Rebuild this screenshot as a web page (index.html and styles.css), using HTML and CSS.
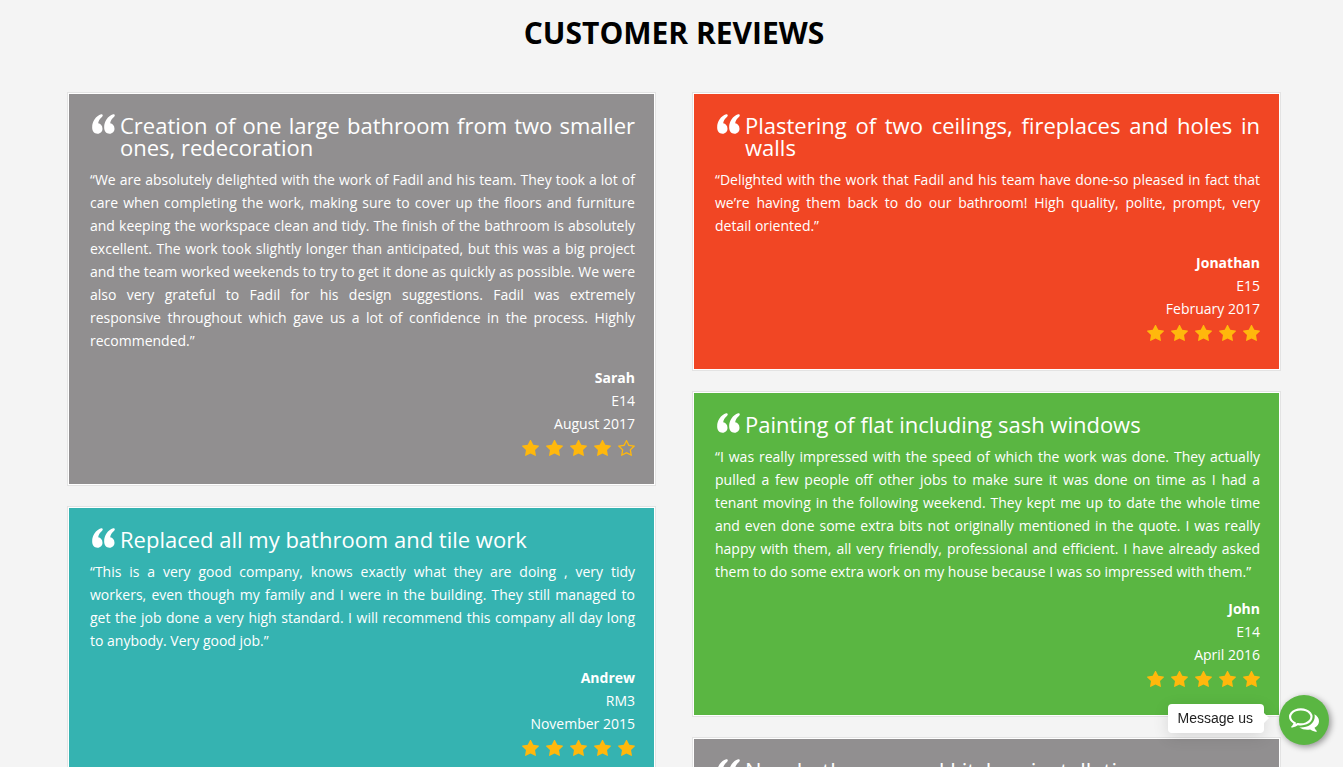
FILE: index.html
```html
<!DOCTYPE html>
<html lang="en">
<head>
  <meta charset="UTF-8">
  <meta name="viewport" content="width=device-width, initial-scale=1">
  <title>Customer Reviews</title>
  <link rel="stylesheet" href="styles.css">
</head>
<body>
  <!-- shared icons -->
  <svg class="icon-defs" aria-hidden="true">
    <symbol id="quote" viewBox="0 0 68 60">
      <path d="M27 1C11 6 0 22 0 40c0 12 6 19 16 19 9 0 15-7 15-15 0-9-6-15-13-16 1-8 5-14 12-20 4-4 1-8-3-7z"/>
      <path d="M63 1C47 6 36 22 36 40c0 12 6 19 16 19 9 0 15-7 15-15 0-9-6-15-13-16 1-8 5-14 12-20 4-4 1-8-3-7z"/>
    </symbol>
    <symbol id="star" viewBox="64 60 1664 1664">
      <path d="M1728 647q0 22-26 48l-363 354 86 500q1 7 1 20 0 21-10.5 35.5t-30.5 14.5q-19 0-40-12l-449-236-449 236q-22 12-40 12-21 0-31.5-14.5t-10.5-35.5q0-6 2-20l86-500-364-354q-25-27-25-48 0-37 56-46l502-73 225-455q19-41 49-41t49 41l225 455 502 73q56 9 56 46z"/>
    </symbol>
    <symbol id="star-o" viewBox="64 60 1664 1664">
      <path d="M1201 1004l306-297-422-62-189-382-189 382-422 62 306 297-73 421 378-199 377 199zm527-357q0 22-26 48l-363 354 86 500q1 7 1 20 0 50-41 50-19 0-40-12l-449-236-449 236q-22 12-40 12-21 0-31.5-14.5t-10.5-35.5q0-6 2-20l86-500-364-354q-25-27-25-48 0-37 56-46l502-73 225-455q19-41 49-41t49 41l225 455 502 73q56 9 56 46z"/>
    </symbol>
  </svg>

  <section class="reviews">
    <h1>Customer Reviews</h1>
    <div class="columns">
      <div class="column">
        <article class="review grey">
          <h2><svg class="quote"><use href="#quote"/></svg>Creation of one large bathroom from two smaller ones, redecoration</h2>
          <p>“We are absolutely delighted with the work of Fadil and his team. They took a lot of care when completing the work, making sure to cover up the floors and furniture and keeping the workspace clean and tidy. The finish of the bathroom is absolutely excellent. The work took slightly longer than anticipated, but this was a big project and the team worked weekends to try to get it done as quickly as possible. We were also very grateful to Fadil for his design suggestions. Fadil was extremely responsive throughout which gave us a lot of confidence in the process. Highly recommended.”</p>
          <div class="author">
            <strong>Sarah</strong>
            <span>E14</span>
            <span>August 2017</span>
            <div class="stars" role="img" aria-label="4 out of 5">
              <svg><use href="#star"/></svg><svg><use href="#star"/></svg><svg><use href="#star"/></svg><svg><use href="#star"/></svg><svg><use href="#star-o"/></svg>
            </div>
          </div>
        </article>
        <article class="review teal">
          <h2><svg class="quote"><use href="#quote"/></svg>Replaced all my bathroom and tile work</h2>
          <p>“This is a very good company, knows exactly what they are doing , very tidy workers, even though my family and I were in the building. They still managed to get the job done a very high standard. I will recommend this company all day long to anybody. Very good job.”</p>
          <div class="author">
            <strong>Andrew</strong>
            <span>RM3</span>
            <span>November 2015</span>
            <div class="stars" role="img" aria-label="5 out of 5">
              <svg><use href="#star"/></svg><svg><use href="#star"/></svg><svg><use href="#star"/></svg><svg><use href="#star"/></svg><svg><use href="#star"/></svg>
            </div>
          </div>
        </article>
      </div>
      <div class="column">
        <article class="review red">
          <h2><svg class="quote"><use href="#quote"/></svg>Plastering of two ceilings, fireplaces and holes in walls</h2>
          <p>“Delighted with the work that Fadil and his team have done-so pleased in fact that we’re having them back to do our bathroom! High quality, polite, prompt, very detail oriented.”</p>
          <div class="author">
            <strong>Jonathan</strong>
            <span>E15</span>
            <span>February 2017</span>
            <div class="stars" role="img" aria-label="5 out of 5">
              <svg><use href="#star"/></svg><svg><use href="#star"/></svg><svg><use href="#star"/></svg><svg><use href="#star"/></svg><svg><use href="#star"/></svg>
            </div>
          </div>
        </article>
        <article class="review green">
          <h2><svg class="quote"><use href="#quote"/></svg>Painting of flat including sash windows</h2>
          <p>“I was really impressed with the speed of which the work was done. They actually pulled a few people off other jobs to make sure it was done on time as I had a tenant moving in the following weekend. They kept me up to date the whole time and even done some extra bits not originally mentioned in the quote. I was really happy with them, all very friendly, professional and efficient. I have already asked them to do some extra work on my house because I was so impressed with them.”</p>
          <div class="author">
            <strong>John</strong>
            <span>E14</span>
            <span>April 2016</span>
            <div class="stars" role="img" aria-label="5 out of 5">
              <svg><use href="#star"/></svg><svg><use href="#star"/></svg><svg><use href="#star"/></svg><svg><use href="#star"/></svg><svg><use href="#star"/></svg>
            </div>
          </div>
        </article>
        <article class="review grey">
          <h2><svg class="quote"><use href="#quote"/></svg>New bathroom and kitchen installation</h2>
        </article>
      </div>
    </div>
  </section>

  <div class="chat">
    <span class="chat-label" id="chat-label">Message us</span>
    <button class="chat-button" type="button" aria-labelledby="chat-label">
      <svg viewBox="0 0 1792 1792"><path d="M704 384q-153 0-286 52t-211.500 141-78.500 191q0 82 53 158t149 132l97 56-35 84q34-20 62-39l44-31 53 10q78 14 153 14 153 0 286-52t211.500-141 78.500-191-78.500-191-211.500-141-286-52zm0-128q191 0 353.500 68.500t256.500 186.500 94 257-94 257-256.500 186.500-353.500 68.500q-86 0-176-16-124 88-278 128-36 9-86 16h-3q-11 0-20.500-8t-11.500-21q-1-3-1-6.500t.5-6.500 2-6l2.500-5 3.500-5.500 4-5 4.500-5 4-4.500q5-6 23-25t26-29.500 22.500-29 25-38.500 20.500-44q-124-72-195-177t-71-224q0-139 94-257t256.500-186.500 353.500-68.500zm822 1169q10 24 20.500 44t25 38.500 22.500 29 26 29.500 23 25q1 1 4 4.500t4.500 5 4 5 3.500 5.500l2.500 5 2 6 .5 6.500-1 6.500q-3 14-13 22t-22 7q-50-7-86-16-154-40-278-128-90 16-176 16-271 0-472-132 58 4 88 4 161 0 309-45t264-129q125-92 192-212t67-254q0-77-23-152 129 71 204 178t75 230q0 120-71 224.500t-195 176.500z"/></svg>
    </button>
  </div>
</body>
</html>
```
FILE: styles.css
```css
* {
  box-sizing: border-box;
}
body {
  margin: 0;
  background: #f4f4f4;
  color: #fff;
  font-family: "Open Sans", sans-serif;
  font-size: 14px;
  line-height: 23px;
}
.icon-defs {
  display: none;
}
.reviews {
  padding: 12px 62px 20px 67px;
}
h1 {
  margin: 0 0 38px;
  color: #000;
  font-size: 30px;
  font-weight: 700;
  line-height: 42px;
  text-align: center;
  text-transform: uppercase;
}
.columns {
  display: grid;
  grid-template-columns: 1fr 1fr;
  gap: 36px;
  align-items: start;
}
.column {
  display: flex;
  flex-direction: column;
  gap: 20px;
}
.review {
  padding: 21px 20px 27px 22px;
  border: 1px solid #e3e3e3;
  box-shadow: inset 0 0 0 1px #fff;
  text-align: justify;
}
.grey {
  background: #918f90;
}
.teal {
  background: #35b3b1;
}
.red {
  background: #f14624;
}
.green {
  background: #5ab642;
}
.review h2 {
  margin: 0 0 10px;
  padding-left: 30px;
  font-size: 22px;
  font-weight: 400;
  line-height: 22px;
}
.quote {
  float: left;
  width: 23px;
  height: 20px;
  margin-left: -28px;
  fill: #fff;
}
.review p {
  margin: 0 0 14px;
}
.author {
  display: flex;
  flex-direction: column;
  align-items: flex-end;
}
.stars {
  display: flex;
  align-items: center;
  gap: 7px;
  height: 23px;
  padding-top: 4px;
}
.stars svg {
  width: 17px;
  height: 17px;
  fill: #ffb80c;
}
.chat {
  position: fixed;
  right: 14px;
  bottom: 22px;
  display: flex;
  align-items: center;
  gap: 15px;
}
.chat-label {
  position: relative;
  margin-bottom: 4px;
  padding: 3px 11px 3px 10px;
  border-radius: 4px;
  background: #fff;
  box-shadow: 0 4px 16px rgba(0, 0, 0, 0.12);
  color: #222;
  font-family: "Liberation Sans", Arial, sans-serif;
}
.chat-label::after {
  content: "";
  position: absolute;
  top: 50%;
  left: 100%;
  margin-top: -5px;
  border: 5px solid transparent;
  border-left-color: #fff;
  border-right: 0;
}
.chat-button {
  display: flex;
  align-items: center;
  justify-content: center;
  width: 50px;
  height: 50px;
  padding: 0;
  border: 0;
  border-radius: 50%;
  background: #5ab642;
  box-shadow: 2px 2px 6px rgba(0, 0, 0, 0.4);
  cursor: pointer;
}
.chat-button svg {
  width: 30px;
  height: 30px;
  margin-bottom: 2px;
  fill: #fff;
}
```
